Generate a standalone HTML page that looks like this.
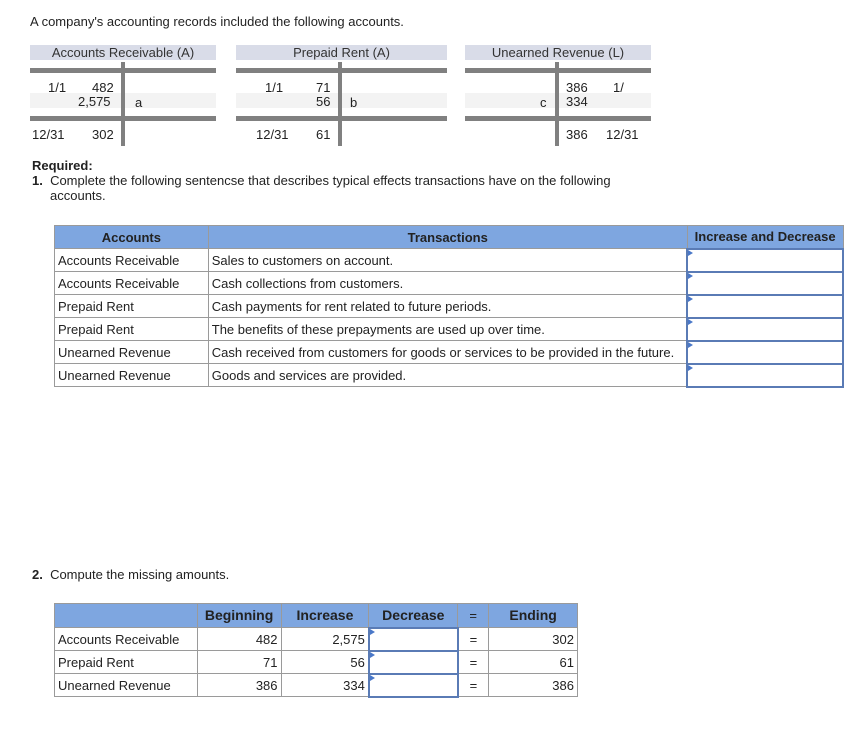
<!DOCTYPE html>
<html><head><style>
body{margin:0;width:864px;height:741px;background:#fff;font-family:"Liberation Sans",Arial,sans-serif;font-size:13px;color:#222;position:relative;overflow:hidden}
.a{position:absolute;white-space:nowrap}
.hb{position:absolute;height:15px;background:#d9dce8;text-align:center;line-height:15px;font-size:13px;color:#333}
.bar{position:absolute;height:5px;background:#808080}
.vl{position:absolute;width:4px;background:#808080}
.sh{position:absolute;height:15px;background:#f3f3f3}
table{position:absolute;border-collapse:collapse}
td,th{border:1px solid #9a9a9a;padding:0 3px;height:23px;line-height:15px;font-size:13px;box-sizing:border-box;vertical-align:middle}
th{background:#7ea6e0;font-weight:bold;color:#222}
.in{border:2px solid #5a7bb5;position:relative}
.in:before{content:"";position:absolute;left:0;top:0;border-left:5px solid #4a78c8;border-top:3px solid transparent;border-bottom:3px solid transparent}
.r{text-align:right}
</style></head><body>
<div class="a" style="left:30px;top:14px">A company's accounting records included the following accounts.</div>

<div class="hb" style="left:30px;top:45px;width:186px">Accounts Receivable (A)</div>
<div class="hb" style="left:236px;top:45px;width:211px">Prepaid Rent (A)</div>
<div class="hb" style="left:465px;top:45px;width:186px">Unearned Revenue (L)</div>

<div class="sh" style="left:30px;top:93px;width:186px"></div>
<div class="sh" style="left:236px;top:93px;width:211px"></div>
<div class="sh" style="left:465px;top:93px;width:186px"></div>

<div class="bar" style="left:30px;top:68px;width:186px"></div>
<div class="bar" style="left:236px;top:68px;width:211px"></div>
<div class="bar" style="left:465px;top:68px;width:186px"></div>
<div class="bar" style="left:30px;top:116px;width:186px"></div>
<div class="bar" style="left:236px;top:116px;width:211px"></div>
<div class="bar" style="left:465px;top:116px;width:186px"></div>
<div class="vl" style="left:121px;top:62px;height:84px"></div>
<div class="vl" style="left:338px;top:62px;height:84px"></div>
<div class="vl" style="left:555px;top:62px;height:84px"></div>

<div class="a" style="left:48px;top:80px">1/1</div>
<div class="a" style="left:92px;top:80px">482</div>
<div class="a" style="left:78px;top:94px">2,575</div>
<div class="a" style="left:135px;top:95px">a</div>
<div class="a" style="left:32px;top:127px">12/31</div>
<div class="a" style="left:92px;top:127px">302</div>

<div class="a" style="left:265px;top:80px">1/1</div>
<div class="a" style="left:316px;top:80px">71</div>
<div class="a" style="left:316px;top:94px">56</div>
<div class="a" style="left:350px;top:95px">b</div>
<div class="a" style="left:256px;top:127px">12/31</div>
<div class="a" style="left:316px;top:127px">61</div>

<div class="a" style="left:566px;top:80px">386</div>
<div class="a" style="left:613px;top:80px">1/</div>
<div class="a" style="left:540px;top:95px">c</div>
<div class="a" style="left:566px;top:94px">334</div>
<div class="a" style="left:566px;top:127px">386</div>
<div class="a" style="left:606px;top:127px">12/31</div>

<div class="a" style="left:32px;top:158px;font-weight:bold">Required:</div>
<div class="a" style="left:32px;top:173px"><b>1.</b>&nbsp; Complete the following sentencse that describes typical effects transactions have on the following</div>
<div class="a" style="left:50px;top:188px">accounts.</div>

<table style="left:54px;top:225px;width:790px">
<tr><th style="width:154px">Accounts</th><th style="width:480px">Transactions</th><th style="width:156px">Increase and Decrease</th></tr>
<tr><td>Accounts Receivable</td><td>Sales to customers on account.</td><td class="in"></td></tr>
<tr><td>Accounts Receivable</td><td>Cash collections from customers.</td><td class="in"></td></tr>
<tr><td>Prepaid Rent</td><td>Cash payments for rent related to future periods.</td><td class="in"></td></tr>
<tr><td>Prepaid Rent</td><td>The benefits of these prepayments are used up over time.</td><td class="in"></td></tr>
<tr><td>Unearned Revenue</td><td>Cash received from customers for goods or services to be provided in the future.</td><td class="in"></td></tr>
<tr><td>Unearned Revenue</td><td>Goods and services are provided.</td><td class="in"></td></tr>
</table>

<div class="a" style="left:32px;top:567px"><b>2.</b>&nbsp; Compute the missing amounts.</div>

<table style="left:54px;top:603px;width:524px">
<tr><th style="width:143px;height:24px"></th><th style="width:84px;font-size:14px">Beginning</th><th style="width:88px;font-size:14px">Increase</th><th style="width:89px;font-size:14px">Decrease</th><th style="width:31px;font-weight:normal">=</th><th style="width:89px;font-size:14px">Ending</th></tr>
<tr><td>Accounts Receivable</td><td class="r">482</td><td class="r">2,575</td><td class="in"></td><td style="text-align:center">=</td><td class="r">302</td></tr>
<tr><td>Prepaid Rent</td><td class="r">71</td><td class="r">56</td><td class="in"></td><td style="text-align:center">=</td><td class="r">61</td></tr>
<tr><td>Unearned Revenue</td><td class="r">386</td><td class="r">334</td><td class="in"></td><td style="text-align:center">=</td><td class="r">386</td></tr>
</table>
</body></html>
